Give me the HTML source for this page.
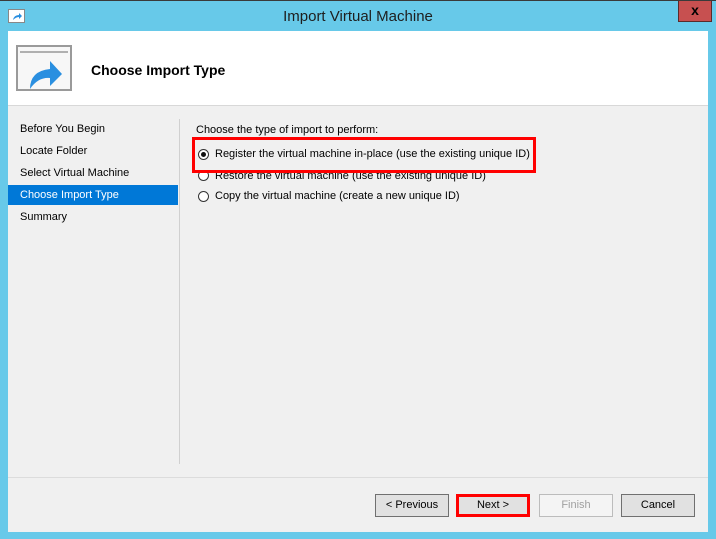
<!DOCTYPE html>
<html><head><style>
*{margin:0;padding:0;box-sizing:border-box}
body{width:716px;height:539px;background:#67c9e9;font-family:"Liberation Sans",sans-serif;font-size:11px;color:#000;position:relative;overflow:hidden;border-top:1px solid #3a3a3a}
.abs{position:absolute}
.title{left:0;width:716px;top:7px;text-align:center;font-size:15px;color:#1e1e1e}
.close{left:678px;top:0;width:34px;height:21px;background:#c75050;border:1px solid #5a2a2a;border-top:none;color:#000;font-weight:bold;text-align:center;font-size:14px;line-height:18px}
.client{left:8px;top:30px;width:700px;height:501px;background:#f0f0f0}
.head{left:0;top:0;width:700px;height:75px;background:#fff;border-bottom:1px solid #d8d8d8}
.nav div{position:absolute;left:0;width:170px;height:20px;padding-left:12px;line-height:20px}
.sel{background:#0078d7;color:#fff}
.btn{position:absolute;top:463px;width:74px;height:23px;border:1px solid #707070;background:#e1e1e1;text-align:center;line-height:21px}
.radio{position:absolute;left:190px;width:11px;height:11px;border:1px solid #333;border-radius:50%;background:#fff}
</style></head><body>
<div class="abs" style="left:8px;top:8px;width:17px;height:14px;background:#fff;border:1px solid #888"><svg width="15" height="12"><path d="M4 10 Q5 5 10 5 L10 3 L13 6 L10 9 L10 7 Q7 7 4 10Z" fill="#2a8fe0"/></svg></div>
<div class="abs title">Import Virtual Machine</div>
<div class="abs close">x</div>
<div class="abs client">
 <div class="abs head">
  <div class="abs" style="left:8px;top:14px;width:56px;height:46px;border:2px solid #9a9a9a;background:#f7f7f7">
   <div style="height:5px;border-bottom:2px solid #b0b0b0;margin:1px 2px 0"></div>
   <svg width="52" height="36" style="position:absolute;left:0;top:8px"><path d="M12 34 Q12 16 32 14 L32 6 L44 19 L32 31 L32 23 Q20 22 12 34Z" fill="#2a8fe0"/></svg>
  </div>
  <div class="abs" style="left:83px;top:31px;font-size:14px;font-weight:bold">Choose Import Type</div>
 </div>
 <div class="nav">
  <div style="top:88px">Before You Begin</div>
  <div style="top:110px">Locate Folder</div>
  <div style="top:132px">Select Virtual Machine</div>
  <div class="sel" style="top:154px">Choose Import Type</div>
  <div style="top:176px">Summary</div>
 </div>
 <div class="abs" style="left:171px;top:88px;width:1px;height:345px;background:#d0d0d0"></div>
 <div class="abs" style="left:188px;top:93px">Choose the type of import to perform:</div>
 <div class="radio" style="top:118px"><div style="width:5px;height:5px;background:#111;border-radius:50%;margin:2px"></div></div>
 <div class="abs" style="left:207px;top:117px">Register the virtual machine in-place (use the existing unique ID)</div>
 <div class="radio" style="top:139px"></div>
 <div class="abs" style="left:207px;top:139px">Restore the virtual machine (use the existing unique ID)</div>
 <div class="radio" style="top:160px"></div>
 <div class="abs" style="left:207px;top:159px">Copy the virtual machine (create a new unique ID)</div>
 <div class="abs" style="left:184px;top:106px;width:344px;height:36px;border:3px solid #f00"></div>
 <div class="abs" style="left:0;top:446px;width:700px;height:1px;background:#dcdcdc"></div>
 <div class="btn" style="left:367px">&lt; Previous</div>
 <div class="btn" style="left:448px;border:3px solid #f00;line-height:17px">Next &gt;</div>
 <div class="btn" style="left:531px;border-color:#bcbcbc;background:#f4f4f4;color:#a0a0a0">Finish</div>
 <div class="btn" style="left:613px">Cancel</div>
</div>
</body></html>
